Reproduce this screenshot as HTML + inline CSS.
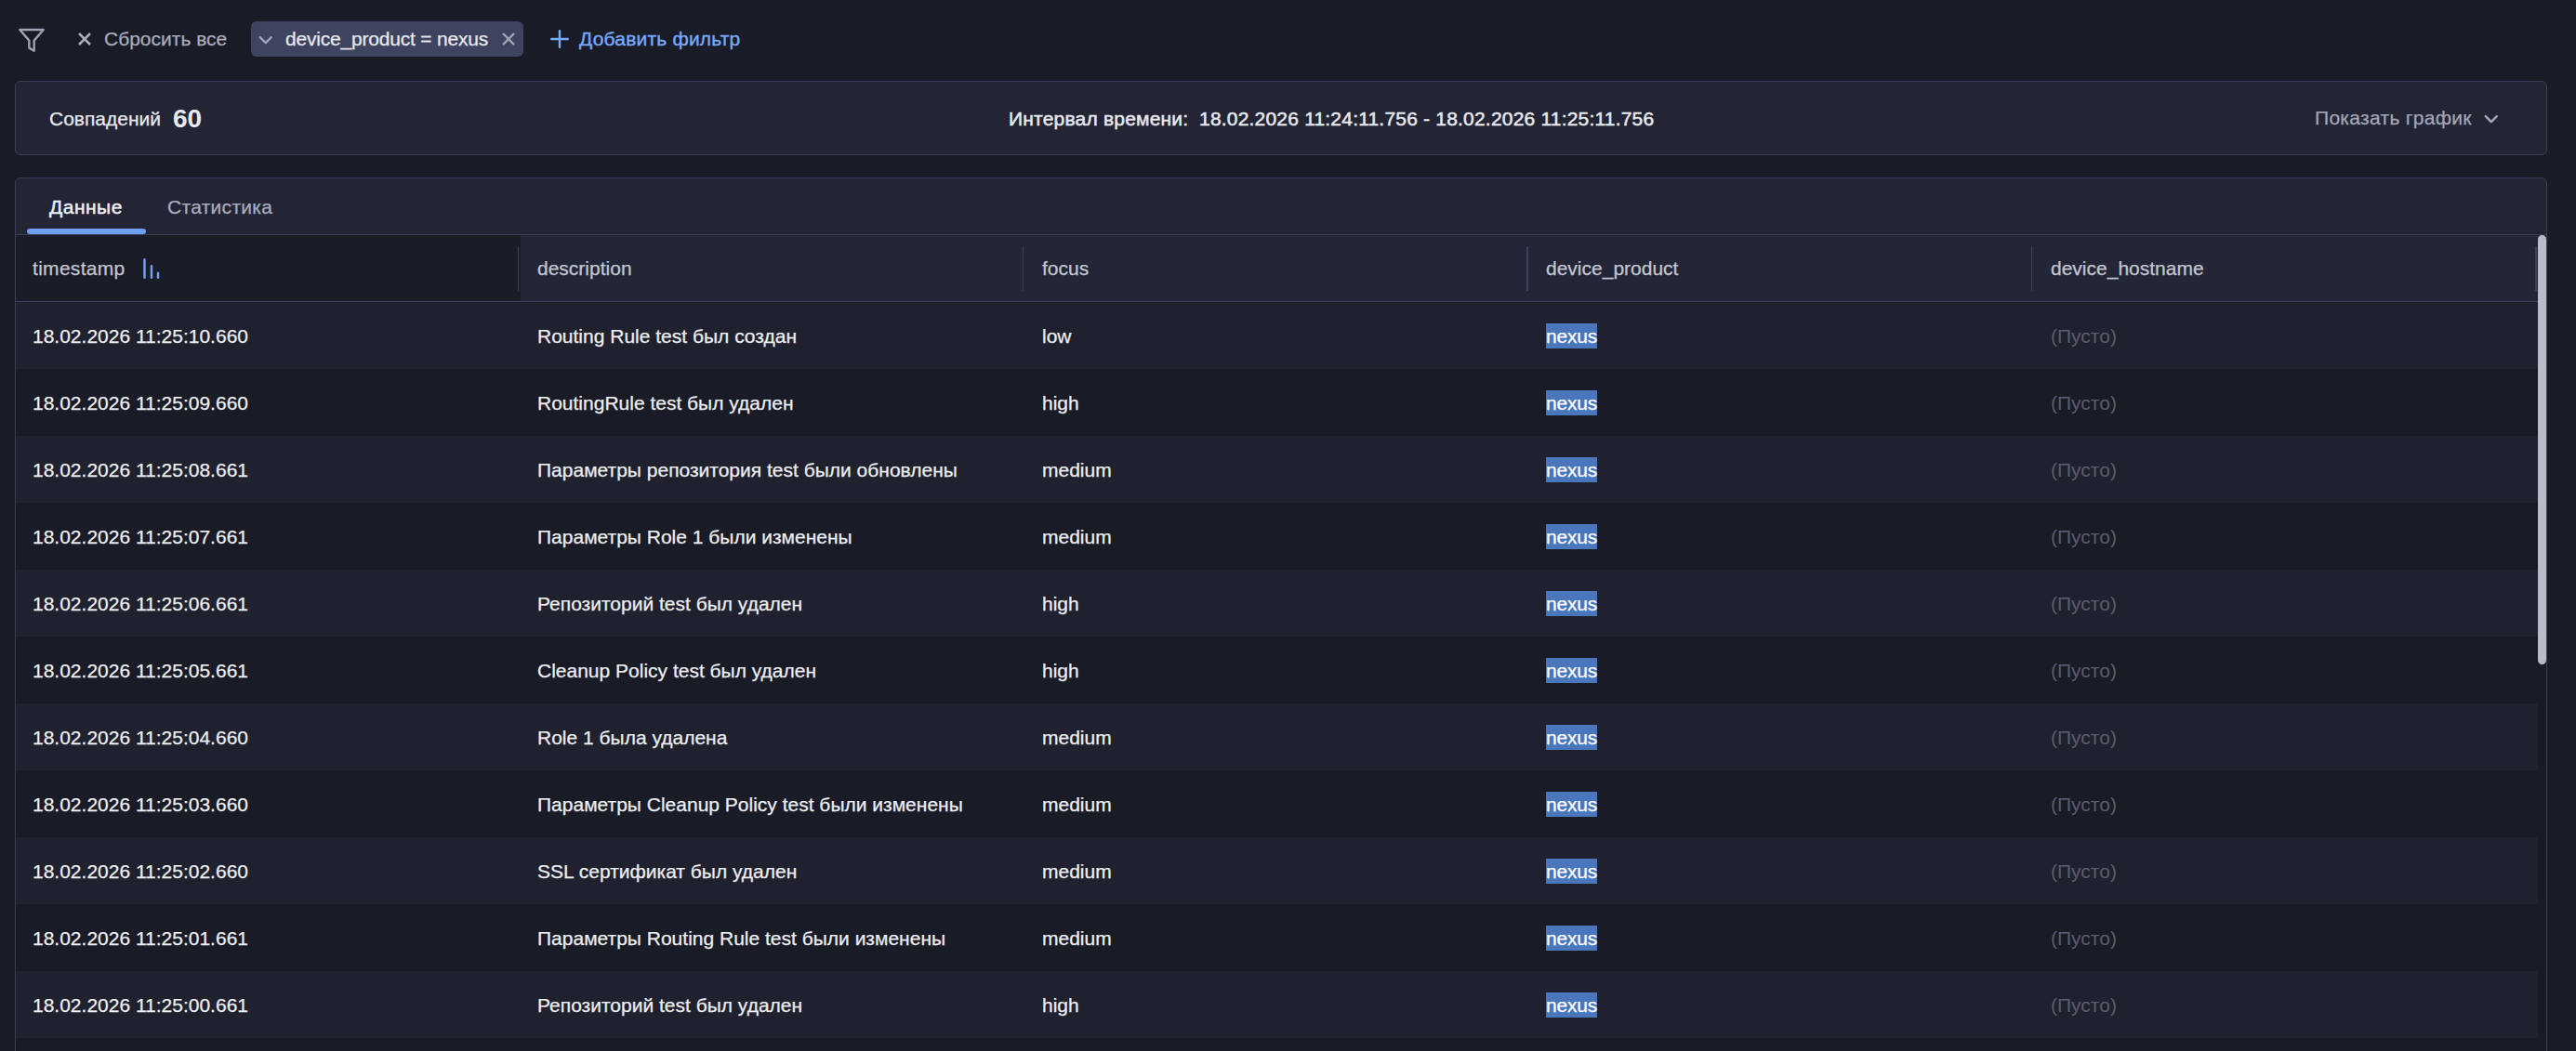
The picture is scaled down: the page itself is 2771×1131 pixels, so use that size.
<!DOCTYPE html>
<html><head><meta charset="utf-8">
<style>
*{box-sizing:border-box;margin:0;padding:0}
html,body{width:2771px;height:1131px;overflow:hidden;background:#191b26;font-family:"Liberation Sans",sans-serif;font-size:21px;color:#e9eaef}
.abs{position:absolute}
.t{position:absolute;white-space:pre;line-height:1;-webkit-text-stroke-width:0.25px}
svg{position:absolute;overflow:visible}
.panel{position:absolute;left:16px;width:2724px;background:#232535;border:1.5px solid #3a3f57;border-radius:6px}
.hdr{position:absolute;top:253px;height:71px}
.row{position:absolute;left:17px;width:2713px;height:72px}
.light{background:#1f212e}
.dark{background:#191b26}
.hl{background:#4a76bc;color:#fff}
.empty{color:#585c6c;-webkit-text-stroke-width:0.1px}
.r{color:#eeeff3;-webkit-text-stroke:0.25px #eeeff3}
</style></head><body>
<!-- filter bar -->
<svg style="left:0;top:0" width="2771" height="80">
  <path d="M21.3 32 H46.7 L36.7 43.6 V54.8 L31.4 51.6 V43.6 Z" fill="none" stroke="#9da1b2" stroke-width="2.4" stroke-linejoin="round"/>
  <path d="M85 36 L97 48 M97 36 L85 48" stroke="#a7abbc" stroke-width="2.6"/>
  <rect x="270" y="23" width="293" height="38" rx="6" fill="#3e4460"/>
  <path d="M279.8 40.2 L285.8 46.2 L291.8 40.2" fill="none" stroke="#9ea2b3" stroke-width="2.4" stroke-linecap="round" stroke-linejoin="round"/>
  <path d="M541 36 L553 48 M553 36 L541 48" stroke="#a2a6b6" stroke-width="2.4"/>
  <path d="M602 33.2 V50.8 M593.2 42 H610.8" stroke="#78aafa" stroke-width="2.4" stroke-linecap="round"/>
</svg>
<div class="t" style="left:112px;top:30.5px;color:#a9adbe">Сбросить все</div>
<div class="t" style="left:307px;top:31px;color:#e8e9ee;letter-spacing:-0.2px">device_product = nexus</div>
<div class="t" style="left:623px;top:31px;color:#78aafa;-webkit-text-stroke:0.4px #78aafa;letter-spacing:0.2px">Добавить фильтр</div>

<!-- stats panel -->
<div class="panel" style="top:87px;height:80px"></div>
<div class="t" style="left:53px;top:117px;color:#e9eaef">Совпадений</div>
<div class="t" style="left:186px;top:114px;font-size:28px;font-weight:700;color:#e9eaef;-webkit-text-stroke-width:0">60</div>
<div class="t" style="left:1085px;top:117px;color:#e9eaef;-webkit-text-stroke:0.5px #e9eaef;letter-spacing:0.2px">Интервал времени:</div>
<div class="t" style="left:1290px;top:117px;color:#e9eaef;-webkit-text-stroke:0.5px #e9eaef;letter-spacing:0.2px">18.02.2026 11:24:11.756 - 18.02.2026 11:25:11.756</div>
<div class="t" style="left:2490px;top:116px;color:#a3a8ba;letter-spacing:0.3px">Показать график</div>
<svg style="left:0;top:0" width="2771" height="200">
  <path d="M2673.8 125.2 L2679.8 131.2 L2685.8 125.2" fill="none" stroke="#a3a8ba" stroke-width="2.5" stroke-linecap="round" stroke-linejoin="round"/>
</svg>

<!-- data panel -->
<div class="panel" style="top:191px;height:1000px"></div>
<div class="t" style="left:53px;top:212px;color:#eeeff3;-webkit-text-stroke:0.5px #eeeff3;letter-spacing:0.5px">Данные</div>
<div class="t" style="left:180px;top:212px;color:#a9adbe;letter-spacing:0.3px">Статистика</div>
<div class="abs" style="left:29px;top:246px;width:128px;height:6px;border-radius:3px;background:#6f9ef0"></div>
<div class="abs" style="left:17px;top:251.5px;width:2722px;height:1.5px;background:#3a3f57"></div>

<!-- header -->
<div class="hdr" style="left:17px;width:543px;background:#1a1c27"></div>
<div class="hdr" style="left:560px;width:2170px;background:#232636"></div>
<div class="abs" style="left:17px;top:323.5px;width:2713px;height:1.5px;background:#3a3f57"></div>
<div class="abs" style="left:557px;top:265px;width:1.3px;height:48px;background:#3c4058"></div>
<div class="abs" style="left:1099.5px;top:265px;width:1.5px;height:48px;background:#3c4058"></div>
<div class="abs" style="left:1642px;top:265px;width:1.5px;height:48px;background:#3c4058"></div>
<div class="abs" style="left:2184.5px;top:265px;width:1.5px;height:48px;background:#3c4058"></div>
<div class="abs" style="left:2727px;top:265px;width:1.5px;height:48px;background:#3c4058"></div>
<div class="t" style="left:35px;top:278px;color:#c3c6d1;letter-spacing:0.3px">timestamp</div>
<svg style="left:0;top:0" width="400" height="400">
  <path d="M155.5 279.2 V298.8 M163 286.2 V298.8 M170 293.7 V298.8" stroke="#6f9ef0" stroke-width="2.5" stroke-linecap="round"/>
</svg>
<div class="t" style="left:578px;top:278px;color:#c3c6d1">description</div>
<div class="t" style="left:1121px;top:278px;color:#c3c6d1">focus</div>
<div class="t" style="left:1663px;top:278px;color:#c3c6d1">device_product</div>
<div class="t" style="left:2206px;top:278px;color:#c3c6d1">device_hostname</div>

<!--ROWS-->
<div class="row light" style="top:325px"></div>
<div class="t r" style="left:35px;top:350.5px">18.02.2026 11:25:10.660</div>
<div class="t r" style="left:578px;top:350.5px">Routing Rule test был создан</div>
<div class="t r" style="left:1121px;top:350.5px">low</div>
<div class="abs hl" style="left:1663px;top:348px;width:55px;height:27px"></div>
<div class="t" style="left:1663px;top:350.5px;color:#fff;letter-spacing:-0.2px">nexus</div>
<div class="t empty" style="left:2206px;top:350.5px">(Пусто)</div>
<div class="row dark" style="top:397px"></div>
<div class="t r" style="left:35px;top:422.5px">18.02.2026 11:25:09.660</div>
<div class="t r" style="left:578px;top:422.5px">RoutingRule test был удален</div>
<div class="t r" style="left:1121px;top:422.5px">high</div>
<div class="abs hl" style="left:1663px;top:420px;width:55px;height:27px"></div>
<div class="t" style="left:1663px;top:422.5px;color:#fff;letter-spacing:-0.2px">nexus</div>
<div class="t empty" style="left:2206px;top:422.5px">(Пусто)</div>
<div class="row light" style="top:469px"></div>
<div class="t r" style="left:35px;top:494.5px">18.02.2026 11:25:08.661</div>
<div class="t r" style="left:578px;top:494.5px">Параметры репозитория test были обновлены</div>
<div class="t r" style="left:1121px;top:494.5px">medium</div>
<div class="abs hl" style="left:1663px;top:492px;width:55px;height:27px"></div>
<div class="t" style="left:1663px;top:494.5px;color:#fff;letter-spacing:-0.2px">nexus</div>
<div class="t empty" style="left:2206px;top:494.5px">(Пусто)</div>
<div class="row dark" style="top:541px"></div>
<div class="t r" style="left:35px;top:566.5px">18.02.2026 11:25:07.661</div>
<div class="t r" style="left:578px;top:566.5px">Параметры Role 1 были изменены</div>
<div class="t r" style="left:1121px;top:566.5px">medium</div>
<div class="abs hl" style="left:1663px;top:564px;width:55px;height:27px"></div>
<div class="t" style="left:1663px;top:566.5px;color:#fff;letter-spacing:-0.2px">nexus</div>
<div class="t empty" style="left:2206px;top:566.5px">(Пусто)</div>
<div class="row light" style="top:613px"></div>
<div class="t r" style="left:35px;top:638.5px">18.02.2026 11:25:06.661</div>
<div class="t r" style="left:578px;top:638.5px">Репозиторий test был удален</div>
<div class="t r" style="left:1121px;top:638.5px">high</div>
<div class="abs hl" style="left:1663px;top:636px;width:55px;height:27px"></div>
<div class="t" style="left:1663px;top:638.5px;color:#fff;letter-spacing:-0.2px">nexus</div>
<div class="t empty" style="left:2206px;top:638.5px">(Пусто)</div>
<div class="row dark" style="top:685px"></div>
<div class="t r" style="left:35px;top:710.5px">18.02.2026 11:25:05.661</div>
<div class="t r" style="left:578px;top:710.5px">Cleanup Policy test был удален</div>
<div class="t r" style="left:1121px;top:710.5px">high</div>
<div class="abs hl" style="left:1663px;top:708px;width:55px;height:27px"></div>
<div class="t" style="left:1663px;top:710.5px;color:#fff;letter-spacing:-0.2px">nexus</div>
<div class="t empty" style="left:2206px;top:710.5px">(Пусто)</div>
<div class="row light" style="top:757px"></div>
<div class="t r" style="left:35px;top:782.5px">18.02.2026 11:25:04.660</div>
<div class="t r" style="left:578px;top:782.5px">Role 1 была удалена</div>
<div class="t r" style="left:1121px;top:782.5px">medium</div>
<div class="abs hl" style="left:1663px;top:780px;width:55px;height:27px"></div>
<div class="t" style="left:1663px;top:782.5px;color:#fff;letter-spacing:-0.2px">nexus</div>
<div class="t empty" style="left:2206px;top:782.5px">(Пусто)</div>
<div class="row dark" style="top:829px"></div>
<div class="t r" style="left:35px;top:854.5px">18.02.2026 11:25:03.660</div>
<div class="t r" style="left:578px;top:854.5px">Параметры Cleanup Policy test были изменены</div>
<div class="t r" style="left:1121px;top:854.5px">medium</div>
<div class="abs hl" style="left:1663px;top:852px;width:55px;height:27px"></div>
<div class="t" style="left:1663px;top:854.5px;color:#fff;letter-spacing:-0.2px">nexus</div>
<div class="t empty" style="left:2206px;top:854.5px">(Пусто)</div>
<div class="row light" style="top:901px"></div>
<div class="t r" style="left:35px;top:926.5px">18.02.2026 11:25:02.660</div>
<div class="t r" style="left:578px;top:926.5px">SSL сертификат был удален</div>
<div class="t r" style="left:1121px;top:926.5px">medium</div>
<div class="abs hl" style="left:1663px;top:924px;width:55px;height:27px"></div>
<div class="t" style="left:1663px;top:926.5px;color:#fff;letter-spacing:-0.2px">nexus</div>
<div class="t empty" style="left:2206px;top:926.5px">(Пусто)</div>
<div class="row dark" style="top:973px"></div>
<div class="t r" style="left:35px;top:998.5px">18.02.2026 11:25:01.661</div>
<div class="t r" style="left:578px;top:998.5px">Параметры Routing Rule test были изменены</div>
<div class="t r" style="left:1121px;top:998.5px">medium</div>
<div class="abs hl" style="left:1663px;top:996px;width:55px;height:27px"></div>
<div class="t" style="left:1663px;top:998.5px;color:#fff;letter-spacing:-0.2px">nexus</div>
<div class="t empty" style="left:2206px;top:998.5px">(Пусто)</div>
<div class="row light" style="top:1045px"></div>
<div class="t r" style="left:35px;top:1070.5px">18.02.2026 11:25:00.661</div>
<div class="t r" style="left:578px;top:1070.5px">Репозиторий test был удален</div>
<div class="t r" style="left:1121px;top:1070.5px">high</div>
<div class="abs hl" style="left:1663px;top:1068px;width:55px;height:27px"></div>
<div class="t" style="left:1663px;top:1070.5px;color:#fff;letter-spacing:-0.2px">nexus</div>
<div class="t empty" style="left:2206px;top:1070.5px">(Пусто)</div>
<div class="row dark" style="top:1117px"></div>
<div class="t r" style="left:35px;top:1142.5px">18.02.2026 11:24:59.661</div>
<div class="t r" style="left:578px;top:1142.5px">Параметры репозитория test были обновлены</div>
<div class="t r" style="left:1121px;top:1142.5px">medium</div>
<div class="abs hl" style="left:1663px;top:1140px;width:55px;height:27px"></div>
<div class="t" style="left:1663px;top:1142.5px;color:#fff;letter-spacing:-0.2px">nexus</div>
<div class="t empty" style="left:2206px;top:1142.5px">(Пусто)</div>
<!--/ROWS-->

<!-- scrollbar -->
<div class="abs" style="left:2730px;top:324px;width:9px;height:807px;background:#191b26"></div>
<div class="abs" style="left:2730px;top:253px;width:9px;height:462px;border-radius:4.5px;background:#b9bcc8"></div>
</body></html>
